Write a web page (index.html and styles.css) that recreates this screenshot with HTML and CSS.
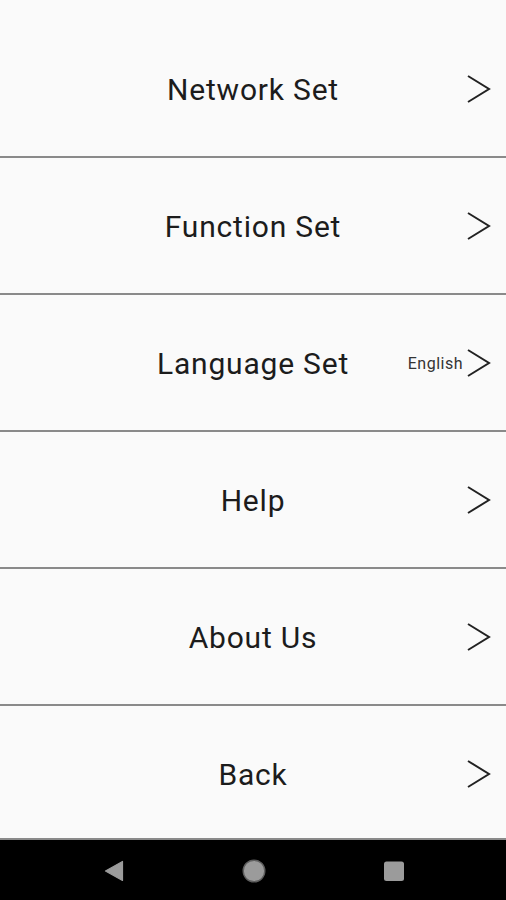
FILE: index.html
```html
<!DOCTYPE html>
<html>
<head>
<meta charset="utf-8">
<link rel="stylesheet" href="styles.css">
</head>
<body>
<div class="screen">
  <div class="status"></div>
  <main class="menu">
    <div class="row"><span class="label">Network Set</span><span class="right"><svg class="chev" viewBox="0 0 26 32"><path d="M2 3 L23 16 L2 29" /></svg></span></div>
    <div class="row"><span class="label">Function Set</span><span class="right"><svg class="chev" viewBox="0 0 26 32"><path d="M2 3 L23 16 L2 29" /></svg></span></div>
    <div class="row"><span class="label">Language Set</span><span class="right"><span class="value">English</span><svg class="chev" viewBox="0 0 26 32"><path d="M2 3 L23 16 L2 29" /></svg></span></div>
    <div class="row"><span class="label">Help</span><span class="right"><svg class="chev" viewBox="0 0 26 32"><path d="M2 3 L23 16 L2 29" /></svg></span></div>
    <div class="row"><span class="label">About Us</span><span class="right"><svg class="chev" viewBox="0 0 26 32"><path d="M2 3 L23 16 L2 29" /></svg></span></div>
    <div class="row"><span class="label">Back</span><span class="right"><svg class="chev" viewBox="0 0 26 32"><path d="M2 3 L23 16 L2 29" /></svg></span></div>
  </main>
  <nav class="navbar">
    <svg class="nav-icon" viewBox="0 0 24 24"><path d="M20.5 2.5 L20.5 21.5 L3.5 12 Z" fill="#9b9b9b" stroke="#9b9b9b" stroke-width="1.2" stroke-linejoin="round"/></svg>
    <svg class="nav-icon" viewBox="0 0 24 24"><circle cx="12" cy="12" r="10.8" fill="#9b9b9b" stroke="#5e5e5e" stroke-width="1.4"/></svg>
    <svg class="nav-icon" viewBox="0 0 24 24"><rect x="2" y="2.5" width="20" height="19.5" rx="2.5" fill="#9b9b9b"/></svg>
  </nav>
</div>
</body>
</html>
```
FILE: styles.css
```css
* { box-sizing: border-box; }
html, body {
  margin: 0;
  padding: 0;
  background: #fafafa;
}
.screen {
  width: 506px;
  height: 900px;
  display: flex;
  flex-direction: column;
  font-family: Roboto, "Noto Sans", sans-serif;
  background: #fafafa;
}
.status {
  height: 21px;
  flex: none;
}
.menu {
  flex: 1;
  overflow: hidden;
  border-bottom: 2px solid #8a8a8a;
  min-height: 0;
}
.row {
  height: 137px;
  border-bottom: 2px solid #8a8a8a;
  display: grid;
  grid-template-columns: 1fr auto 1fr;
  align-items: center;
}
.label {
  grid-column: 2;
  font-size: 30px;
  color: #1c1c1c;
  letter-spacing: 0.8px;
  line-height: 1;
  padding-top: 2px;
}
.right {
  grid-column: 3;
  justify-self: end;
  display: flex;
  align-items: center;
  gap: 3px;
  padding-right: 14px;
}
.value {
  font-size: 16px;
  letter-spacing: 0.5px;
  color: #333;
  margin-top: 1px;
}
.chev {
  width: 26px;
  height: 32px;
  display: block;
}
.chev path {
  fill: none;
  stroke: #222;
  stroke-width: 2;
}
.navbar {
  height: 60px;
  flex: none;
  background: #000;
  display: flex;
  align-items: center;
  justify-content: center;
  gap: 116px;
  padding-left: 2px;
  padding-top: 2px;
}
.nav-icon {
  width: 24px;
  height: 24px;
  display: block;
}
```
